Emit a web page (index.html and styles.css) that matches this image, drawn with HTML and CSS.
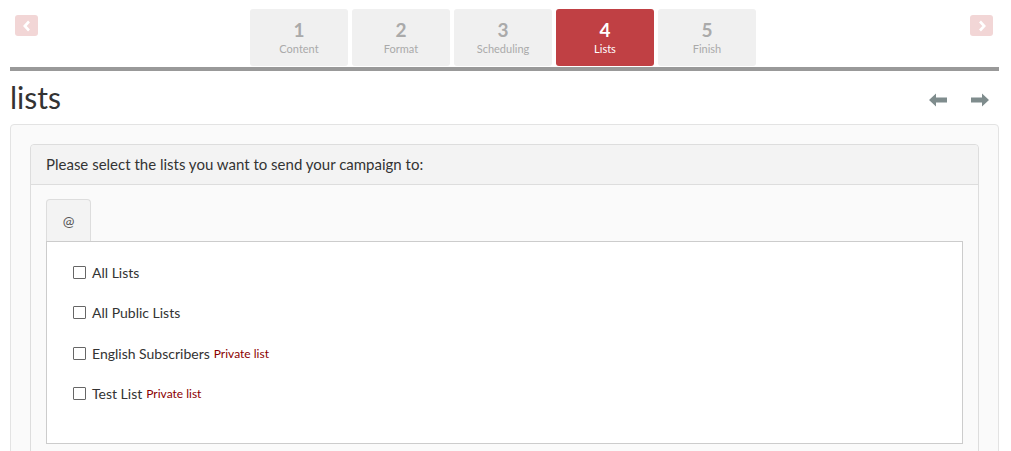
FILE: index.html
```html
<!DOCTYPE html>
<html>
<head>
<meta charset="utf-8">
<link rel="stylesheet" href="styles.css">
</head>
<body>
<div class="page">
  <div class="wizard">
    <div class="nav-btn prev">
      <svg width="10" height="12" viewBox="0 0 10 12"><path d="M7 1.5 L2.8 6 L7 10.5" fill="none" stroke="#fff" stroke-width="2.6"/></svg>
    </div>
    <div class="steps">
      <div class="step"><span class="num">1</span><span class="lbl">Content</span></div>
      <div class="step"><span class="num">2</span><span class="lbl">Format</span></div>
      <div class="step"><span class="num">3</span><span class="lbl">Scheduling</span></div>
      <div class="step active"><span class="num">4</span><span class="lbl">Lists</span></div>
      <div class="step"><span class="num">5</span><span class="lbl">Finish</span></div>
    </div>
    <div class="nav-btn next">
      <svg width="10" height="12" viewBox="0 0 10 12"><path d="M3 1.5 L7.2 6 L3 10.5" fill="none" stroke="#fff" stroke-width="2.6"/></svg>
    </div>
  </div>
  <div class="rule"></div>
  <div class="title-row">
    <h1>lists</h1>
    <div class="arrows">
      <svg width="18" height="14" viewBox="0 0 18 14"><path d="M0 7 L7 0.5 L7 4.5 L18 4.5 L18 9.5 L7 9.5 L7 13.5 Z" fill="#7f8c8d"/></svg>
      <svg width="18" height="14" viewBox="0 0 18 14"><path d="M18 7 L11 0.5 L11 4.5 L0 4.5 L0 9.5 L11 9.5 L11 13.5 Z" fill="#7f8c8d"/></svg>
    </div>
  </div>
  <div class="well">
    <div class="panel">
      <div class="panel-head">Please select the lists you want to send your campaign to:</div>
      <div class="panel-body">
        <div class="tabs"><div class="tab">@</div></div>
        <div class="tab-content">
          <label class="row"><span class="cb"></span>All Lists</label>
          <label class="row"><span class="cb"></span>All Public Lists</label>
          <label class="row"><span class="cb"></span>English Subscribers <span class="priv">Private list</span></label>
          <label class="row"><span class="cb"></span>Test List <span class="priv">Private list</span></label>
        </div>
      </div>
    </div>
  </div>
</div>
</body>
</html>
```

FILE: styles.css
```css
html, body {
  margin: 0;
  padding: 0;
  background: #fff;
  font-family: "Lato", "Open Sans", sans-serif;
  color: #333;
  overflow: hidden;
}
.page {
  padding: 0 12px 0 10px;
}
.wizard {
  display: flex;
  align-items: flex-start;
  justify-content: space-between;
  padding-top: 9px;
  height: 58px;
}
.nav-btn {
  width: 23px;
  height: 21px;
  margin-top: 6px;
  background: #f2d6d6;
  border-radius: 3px;
  display: flex;
  align-items: center;
  justify-content: center;
}
.prev { margin-left: 5px; }
.next { margin-right: 6px; }
.steps {
  display: flex;
  gap: 4px;
  margin-right: 2px;
}
.step {
  width: 98px;
  height: 57px;
  background: #f0f0f0;
  border-radius: 3px;
  display: flex;
  flex-direction: column;
  align-items: center;
  color: #aaa;
}
.step .num {
  font-weight: bold;
  font-size: 19px;
  line-height: 19px;
  margin-top: 11px;
}
.step .lbl {
  font-size: 11px;
  line-height: 13px;
  margin-top: 3px;
}
.step.active {
  background: #c04044;
  color: #fff;
}
.rule {
  height: 4px;
  background: #999;
}
.title-row {
  display: flex;
  justify-content: space-between;
  align-items: center;
  height: 53px;
}
h1 {
  margin: 0;
  font-weight: normal;
  font-size: 30px;
  color: #333;
  line-height: 53px;
}
.arrows {
  display: flex;
  gap: 24px;
  margin-right: 10px;
  margin-top: 4px;
}
.arrows svg { display: block; }
.well {
  background: #fafafa;
  border: 1px solid #e3e3e3;
  border-radius: 4px;
  padding: 19px 19px 0 19px;
  height: 400px;
}
.panel {
  border: 1px solid #ddd;
  border-radius: 4px;
  background: #fafafa;
}
.panel-head {
  background: #f3f3f3;
  border-bottom: 1px solid #ddd;
  height: 39px;
  line-height: 39px;
  padding-left: 15px;
  font-size: 15px;
  border-radius: 4px 4px 0 0;
}
.panel-body {
  padding: 14px 15px 20px 15px;
}
.tabs {
  display: flex;
}
.tab {
  width: 43px;
  height: 41px;
  line-height: 41px;
  text-align: center;
  font-size: 14px;
  color: #555;
  background: #f3f3f3;
  border: 1px solid #ddd;
  border-bottom: none;
  border-radius: 4px 4px 0 0;
}
.tab-content {
  background: #fff;
  border: 1px solid #ccc;
  height: 203px;
  padding: 10px 0 0 26px;
  box-sizing: border-box;
}
.row {
  display: flex;
  align-items: center;
  height: 40.5px;
  font-size: 14px;
  color: #333;
}
.cb {
  width: 11px;
  height: 11px;
  border: 1px solid #666;
  background: #fff;
  margin-right: 6px;
  border-radius: 1px;
}
.priv {
  color: #8b0000;
  font-size: 12px;
  margin-left: 4px;
}
```
